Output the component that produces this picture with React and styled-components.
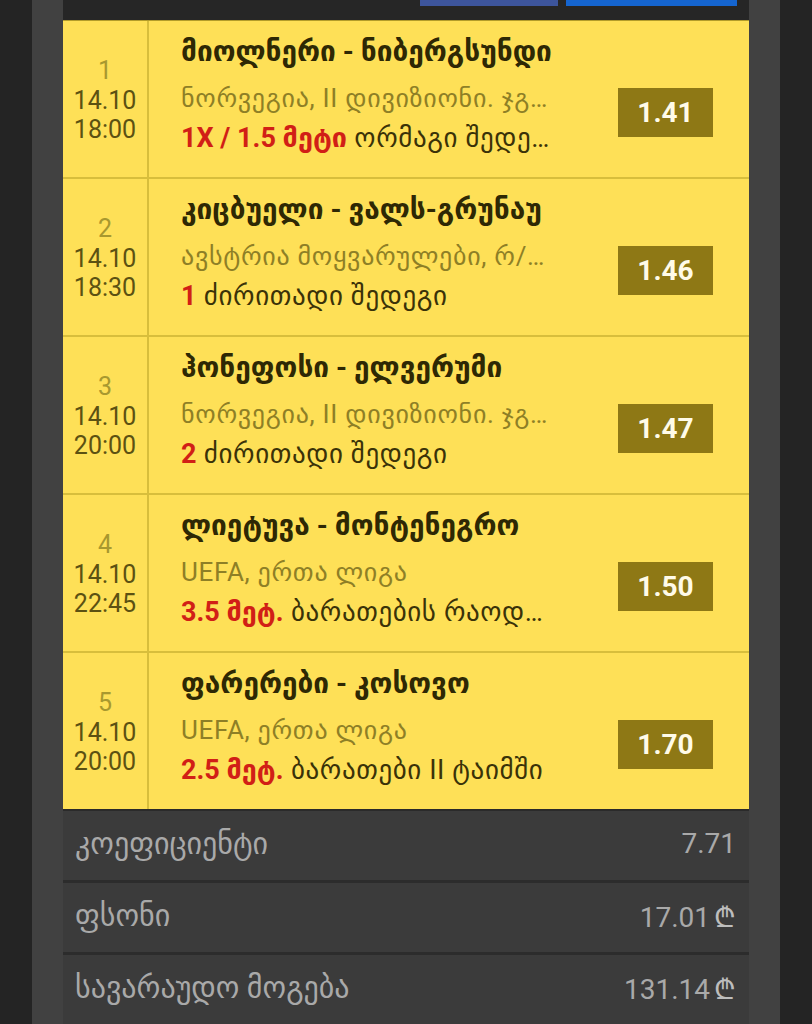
import styled, { createGlobalStyle } from 'styled-components';

const GlobalStyle = createGlobalStyle`
  html, body {
    margin: 0;
    padding: 0;
    background: #242424;
  }
  body {
    font-family: Roboto, "DejaVu Sans", sans-serif;
  }
`;

const Page = styled.div`
  width: 812px;
  height: 1024px;
  overflow: hidden;
  background: #242424;
  display: flex;
  justify-content: center;
`;

const Frame = styled.div`
  width: 748px;
  background: #414141;
  padding: 0 31px;
  box-sizing: border-box;
`;

const TopBar = styled.div`
  height: 20px;
  background: #262626;
  display: flex;
  justify-content: flex-end;
  align-items: flex-start;
  gap: 8px;
  padding-right: 12px;
`;

const TopButton = styled.div`
  height: 6px;
  width: ${p => p.w}px;
  background: ${p => p.color};
`;

const List = styled.div`
  background: #fee057;
  border-top: 1px solid #b39c2a;
`;

const Row = styled.div`
  display: grid;
  grid-template-columns: 86px 1fr;
  height: 156px;
  border-bottom: 2px solid #d8be3c;

  &:last-child {
    border-bottom: none;
  }
`;

const Side = styled.div`
  border-right: 2px solid #d8be3c;
  display: flex;
  flex-direction: column;
  align-items: center;
  padding-top: 35px;
  font-family: Roboto, sans-serif;
  font-size: 25px;
  line-height: 29.5px;
  color: #5c5112;
`;

const Num = styled.div`
  color: #a8982f;
`;

const Main = styled.div`
  display: flex;
  align-items: flex-start;
  padding-left: 32px;
  padding-right: 36px;
`;

const Info = styled.div`
  flex: 1;
  min-width: 0;
  padding-top: 8px;
`;

const Title = styled.div`
  font-family: Roboto, "DejaVu Sans", sans-serif;
  font-weight: bold;
  font-size: 28px;
  line-height: 46px;
  color: #2e2804;
  white-space: nowrap;
`;

const Sub = styled.div`
  font-family: Roboto, "DejaVu Sans", sans-serif;
  font-size: 26px;
  letter-spacing: 0.7px;
  line-height: 46px;
  color: #8e7f26;
  white-space: nowrap;
  overflow: hidden;
  text-overflow: ellipsis;
  max-width: 374px;
`;

const Bet = styled.div`
  font-family: Roboto, "DejaVu Sans", sans-serif;
  font-size: 27px;
  letter-spacing: 0.6px;
  line-height: 34px;
  color: #3a3208;
  white-space: nowrap;
  overflow: hidden;
  text-overflow: ellipsis;
  max-width: 372px;
`;

const Pick = styled.span`
  color: #d11f16;
  font-weight: bold;
  letter-spacing: 0;
`;

const Odds = styled.div`
  width: 95px;
  height: 49px;
  margin-top: 67px;
  background: #8e7815;
  color: #fffbe8;
  font-family: Roboto, sans-serif;
  font-weight: bold;
  font-size: 28px;
  display: flex;
  align-items: center;
  justify-content: center;
  flex-shrink: 0;
`;

const Summary = styled.div`
  background: #3b3b3b;
  border-top: 2px solid #2a2a2a;
`;

const SumRow = styled.div`
  display: flex;
  justify-content: space-between;
  align-items: center;
  height: 65px;
  padding: 0 13px 4px 12px;
  border-bottom: 3px solid #2c2c2c;
  font-family: Roboto, "DejaVu Sans", sans-serif;
  font-size: 28px;
  color: #a9a9a9;
`;

const Label = styled.span`
  font-size: 30px;
`;

const Lari = styled.span`
  font-family: "DejaVu Sans", sans-serif;
  font-size: 28px;
  margin-left: 4px;
  color: #bdbdbd;
`;

const matches = [
  { n: 1, d: '14.10', t: '18:00', title: 'მიოლნერი - ნიბერგსუნდი', sub: 'ნორვეგია, II დივიზიონი. ჯგუფი 1', pick: '1X / 1.5 მეტი', bet: 'ორმაგი შედეგი', odds: '1.41' },
  { n: 2, d: '14.10', t: '18:30', title: 'კიცბუელი - ვალს-გრუნაუ', sub: 'ავსტრია მოყვარულები, რ/ლიგა', pick: '1', bet: 'ძირითადი შედეგი', odds: '1.46' },
  { n: 3, d: '14.10', t: '20:00', title: 'ჰონეფოსი - ელვერუმი', sub: 'ნორვეგია, II დივიზიონი. ჯგუფი 2', pick: '2', bet: 'ძირითადი შედეგი', odds: '1.47' },
  { n: 4, d: '14.10', t: '22:45', title: 'ლიეტუვა - მონტენეგრო', sub: 'UEFA, ერთა ლიგა', pick: '3.5 მეტ.', bet: 'ბარათების რაოდენობა', odds: '1.50' },
  { n: 5, d: '14.10', t: '20:00', title: 'ფარერები - კოსოვო', sub: 'UEFA, ერთა ლიგა', pick: '2.5 მეტ.', bet: 'ბარათები II ტაიმში', odds: '1.70' },
];

const totals = [
  { label: 'კოეფიციენტი', value: '7.71', lari: false },
  { label: 'ფსონი', value: '17.01', lari: true },
  { label: 'სავარაუდო მოგება', value: '131.14', lari: true },
];

export default function App() {
  return (
    <>
      <GlobalStyle />
      <Page>
        <Frame>
          <TopBar>
            <TopButton w={138} color="#3d559c" />
            <TopButton w={171} color="#1565d0" />
          </TopBar>
          <List>
            {matches.map(m => (
              <Row key={m.n}>
                <Side>
                  <Num>{m.n}</Num>
                  <div>{m.d}</div>
                  <div>{m.t}</div>
                </Side>
                <Main>
                  <Info>
                    <Title>{m.title}</Title>
                    <Sub>{m.sub}</Sub>
                    <Bet>
                      <Pick>{m.pick}</Pick> {m.bet}
                    </Bet>
                  </Info>
                  <Odds>{m.odds}</Odds>
                </Main>
              </Row>
            ))}
          </List>
          <Summary>
            {totals.map(s => (
              <SumRow key={s.label}>
                <Label>{s.label}</Label>
                <span>
                  {s.value}
                  {s.lari && <Lari>₾</Lari>}
                </span>
              </SumRow>
            ))}
          </Summary>
        </Frame>
      </Page>
    </>
  );
}
